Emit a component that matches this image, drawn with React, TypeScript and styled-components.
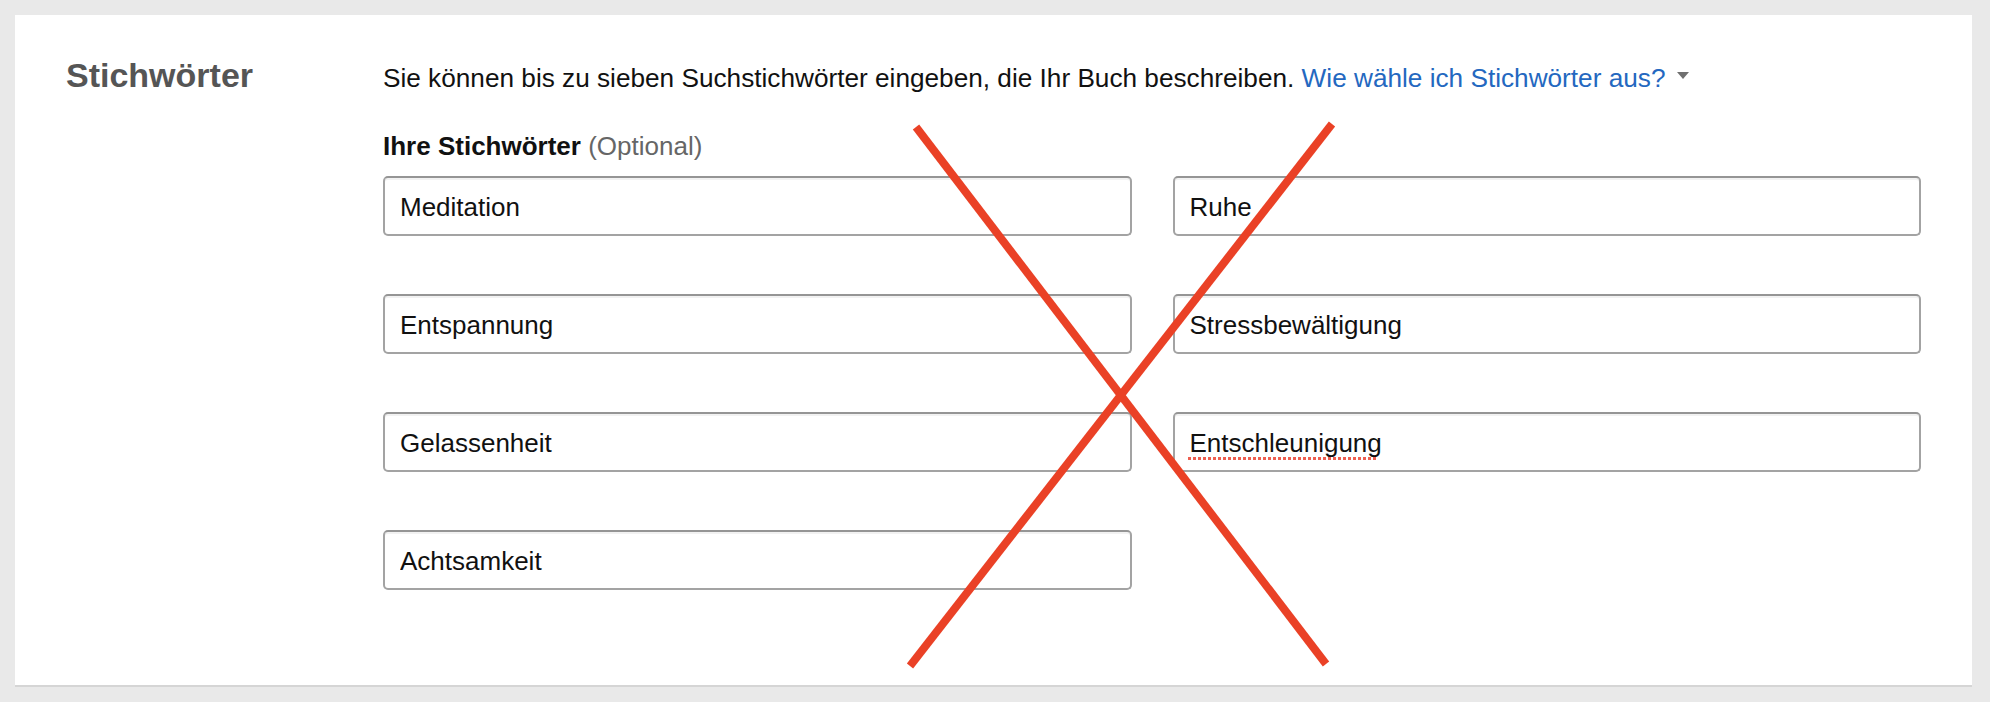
import React from 'react';
import styled, { createGlobalStyle } from 'styled-components';

const GlobalStyle = createGlobalStyle`
  html, body {
    margin: 0;
    padding: 0;
    background: #e9e9e9;
    font-family: "Liberation Sans", Arial, sans-serif;
    color: #111;
  }
`;

const Page = styled.div`
  position: relative;
  padding: 15px 18px 15px 15px;
`;

const Card = styled.section`
  box-sizing: border-box;
  height: 672px;
  background: #fff;
  border-bottom: 2px solid #d5d5d5;
  padding: 47px 51px 0 51px;
  display: grid;
  grid-template-columns: 317px 1fr;
  align-items: start;
`;

const Heading = styled.h2`
  margin: 0;
  font-size: 34px;
  line-height: 26px;
  font-weight: bold;
  color: #555;
`;

const Body = styled.div`
  display: flex;
  flex-direction: column;
`;

const Intro = styled.p`
  margin: 0;
  font-size: 26.2px;
  line-height: 32px;
  display: flex;
  align-items: center;
  white-space: pre;
`;

const Link = styled.a`
  color: #2468c0;
  text-decoration: none;
  cursor: pointer;
`;

const Caret = styled.span`
  display: inline-block;
  margin-left: 12px;
  margin-top: -6px;
  width: 0;
  height: 0;
  border-left: 6px solid transparent;
  border-right: 6px solid transparent;
  border-top: 7px solid #707070;
`;

const Label = styled.div`
  margin-top: 36px;
  font-size: 26px;
  line-height: 32px;
  font-weight: bold;
`;

const Optional = styled.span`
  font-weight: normal;
  color: #666;
`;

const Fields = styled.div`
  margin-top: 14px;
  display: grid;
  grid-template-columns: 1fr 1fr;
  column-gap: 41px;
  row-gap: 58px;
`;

const FieldWrap = styled.div`
  position: relative;
`;

const Input = styled.input`
  box-sizing: border-box;
  width: 100%;
  height: 60px;
  padding: 2px 15px 0;
  border: 2px solid #a3a3a3;
  border-top-color: #959595;
  border-radius: 5px;
  box-shadow: inset 0 2px 0 rgba(0, 0, 0, 0.05);
  font-family: "Liberation Sans", Arial, sans-serif;
  font-size: 26px;
  color: #111;
  background: #fff;
  outline: none;
`;

const Squiggle = styled.span<{ $width: number }>`
  position: absolute;
  left: 15px;
  top: 45px;
  width: ${(p) => p.$width}px;
  height: 3px;
  background-image: linear-gradient(to right, #ee5f50 55%, transparent 55%);
  background-size: 5px 3px;
  background-repeat: repeat-x;
  pointer-events: none;
`;

const Cross = styled.svg`
  position: absolute;
  left: 0;
  top: 0;
  width: 1990px;
  height: 702px;
  pointer-events: none;
`;

const keywords: { value: string; misspelled?: number }[] = [
  { value: 'Meditation' },
  { value: 'Ruhe' },
  { value: 'Entspannung' },
  { value: 'Stressbewältigung' },
  { value: 'Gelassenheit' },
  { value: 'Entschleunigung', misspelled: 190 },
  { value: 'Achtsamkeit' },
];

export default function App() {
  return (
    <>
      <GlobalStyle />
      <Page>
        <Card>
          <Heading>Stichwörter</Heading>
          <Body>
            <Intro>
              {'Sie können bis zu sieben Suchstichwörter eingeben, die Ihr Buch beschreiben. '}
              <Link>Wie wähle ich Stichwörter aus?</Link>
              <Caret />
            </Intro>
            <Label>
              Ihre Stichwörter <Optional>(Optional)</Optional>
            </Label>
            <Fields>
              {keywords.map((k) => (
                <FieldWrap key={k.value}>
                  <Input defaultValue={k.value} spellCheck={false} />
                  {k.misspelled && <Squiggle $width={k.misspelled} />}
                </FieldWrap>
              ))}
            </Fields>
          </Body>
        </Card>
        <Cross viewBox="0 0 1990 702">
          <line x1="916" y1="127" x2="1326" y2="664" stroke="#ea4126" strokeWidth="8" />
          <line x1="1332" y1="124" x2="910" y2="666" stroke="#ea4126" strokeWidth="8" />
        </Cross>
      </Page>
    </>
  );
}
